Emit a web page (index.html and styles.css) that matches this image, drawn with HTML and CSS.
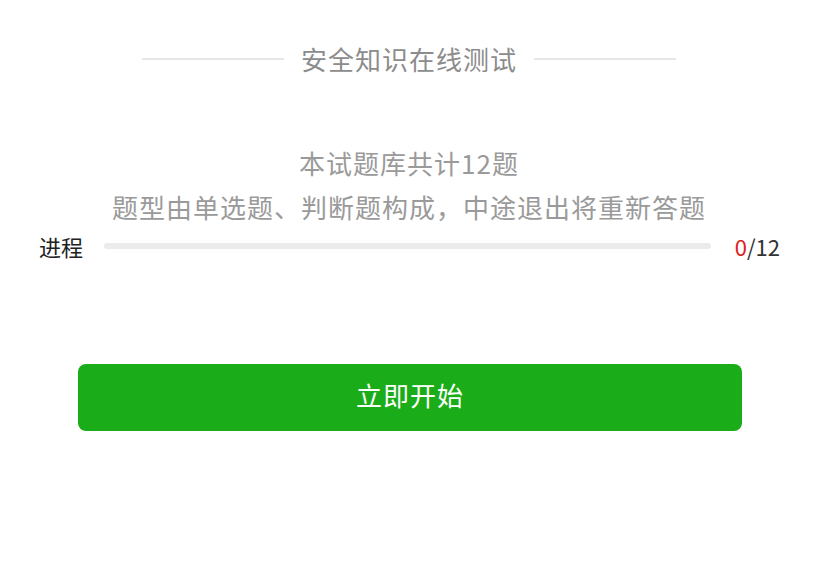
FILE: index.html
```html
<!DOCTYPE html>
<html lang="zh">
<head>
<meta charset="utf-8">
<link rel="stylesheet" href="styles.css">
</head>
<body>
<div class="page">
  <div class="title-row">
    <span class="rule"></span>
    <h1 class="title">安全知识在线测试</h1>
    <span class="rule"></span>
  </div>
  <div class="intro">
    <p class="intro-line">本试题库共计12题</p>
    <p class="intro-line">题型由单选题、判断题构成，中途退出将重新答题</p>
  </div>
  <div class="progress-row">
    <span class="progress-label">进程</span>
    <div class="progress-track"><div class="progress-fill" style="width:0%"></div></div>
    <span class="progress-count"><span class="current">0</span>/12</span>
  </div>
  <div class="action">
    <button class="start-btn">立即开始</button>
  </div>
</div>
</body>
</html>
```
FILE: styles.css
```css
html, body {
  margin: 0;
  padding: 0;
  background: #ffffff;
}
body {
  font-family: "Noto Sans CJK SC", "Noto Sans", sans-serif;
  width: 818px;
  height: 574px;
  overflow: hidden;
}
.page {
  display: flex;
  flex-direction: column;
}
.title-row {
  display: flex;
  align-items: center;
  justify-content: center;
  gap: 17px;
  margin-top: 41px;
  height: 36px;
}
.rule {
  width: 142px;
  height: 2px;
  background: #e6e6e6;
}
.title {
  margin: 0;
  font-size: 26px;
  font-weight: 400;
  line-height: 36px;
  color: #8c8c8c;
  letter-spacing: 1px;
}
.intro {
  margin-top: 64px;
  display: flex;
  flex-direction: column;
  align-items: center;
}
.intro-line {
  margin: 0;
  font-size: 26px;
  line-height: 44px;
  color: #9a9a9a;
  letter-spacing: 1px;
}
.progress-row {
  display: flex;
  align-items: center;
  height: 30px;
  margin-top: 2px;
  padding: 0 38px 0 39px;
}
.progress-label {
  font-size: 22px;
  color: #222;
  width: 65px;
  line-height: 30px;
}
.progress-track {
  flex: 1;
  height: 6px;
  border-radius: 3px;
  background: #ebebeb;
  overflow: hidden;
}
.progress-fill {
  height: 100%;
  background: #1aad19;
}
.progress-count {
  width: 69px;
  text-align: right;
  font-size: 22px;
  line-height: 30px;
  color: #333;
}
.current {
  color: #e02020;
}
.action {
  margin-top: 103px;
  padding: 0 76px 0 78px;
}
.start-btn {
  width: 100%;
  height: 67px;
  padding: 0 0 7px 0;
  border: none;
  border-radius: 8px;
  background: #1aad19;
  color: #ffffff;
  font-family: "Noto Sans CJK SC", "Noto Sans", sans-serif;
  font-size: 26px;
  letter-spacing: 1px;
  cursor: pointer;
}
```
